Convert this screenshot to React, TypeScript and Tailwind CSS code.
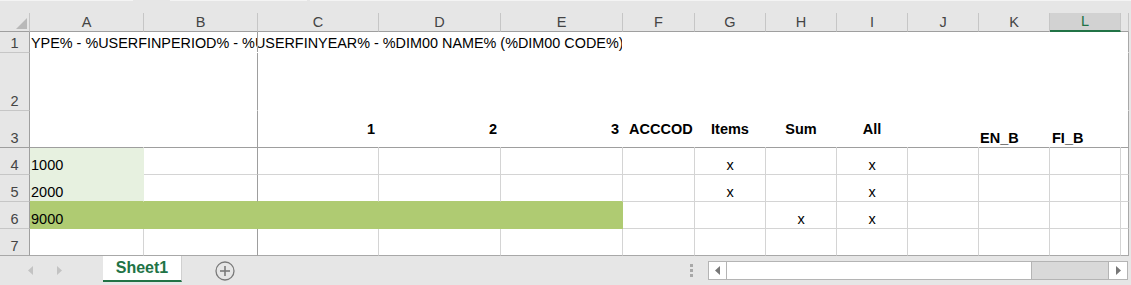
import React from 'react';

const COLS = ['A', 'B', 'C', 'D', 'E', 'F', 'G', 'H', 'I', 'J', 'K', 'L', 'M'];

type C = { t: string; cls: string };

const CONTENT: Record<string, C> = {
  C3: { t: '1', cls: 'justify-end items-center pr-[3px] font-bold' },
  D3: { t: '2', cls: 'justify-end items-center pr-[3px] font-bold' },
  E3: { t: '3', cls: 'justify-end items-center pr-[3px] font-bold' },
  F3: { t: 'ACCCOD', cls: 'justify-start items-center pl-[6px] font-bold' },
  G3: { t: 'Items', cls: 'justify-center items-center font-bold' },
  H3: { t: 'Sum', cls: 'justify-center items-center font-bold' },
  I3: { t: 'All', cls: 'justify-center items-center font-bold' },
  K3: { t: 'EN_B', cls: 'justify-start items-end pl-[1px] font-bold' },
  L3: { t: 'FI_B', cls: 'justify-start items-end pl-[2px] font-bold' },
  A4: { t: '1000', cls: 'justify-start items-end pl-[1px]' },
  G4: { t: 'x', cls: 'justify-center items-end' },
  I4: { t: 'x', cls: 'justify-center items-end' },
  A5: { t: '2000', cls: 'justify-start items-end pl-[1px]' },
  G5: { t: 'x', cls: 'justify-center items-end' },
  I5: { t: 'x', cls: 'justify-center items-end' },
  A6: { t: '9000', cls: 'justify-start items-end pl-[1px]' },
  H6: { t: 'x', cls: 'justify-center items-end' },
  I6: { t: 'x', cls: 'justify-center items-end' },
};

function bgCls(r: number, c: number) {
  if ((r === 4 || r === 5) && c === 0) return 'bg-[#e7f1e0]';
  if (r === 6 && c <= 4) return 'bg-[#afcb72]';
  return 'bg-white';
}

function rightCls(r: number, c: number) {
  if (c === 12) return 'border-r-[#a8a8a8]';
  if (r === 6 && c <= 4) return 'border-r-[#afcb72]';
  if ((r === 4 || r === 5) && c === 0) return 'border-r-[#e7f1e0]';
  if (c === 1) return 'border-r-[#9e9e9e]';
  if (r <= 3) return 'border-r-white';
  return 'border-r-[#d4d4d4]';
}

function bottomCls(r: number, c: number) {
  if (r === 3) return 'border-b-[#9e9e9e]';
  if (r === 7) return 'border-b-[#a8a8a8]';
  if (r <= 2) return 'border-b-white';
  if ((r === 5 || r === 6) && c <= 4) return 'border-b-[#afcb72]';
  if (r === 4 && c === 0) return 'border-b-[#e7f1e0]';
  return 'border-b-[#d4d4d4]';
}

function rowHeadBottom(r: number) {
  if (r === 3) return 'border-b-[#9e9e9e]';
  if (r === 7) return 'border-b-[#a8a8a8]';
  return 'border-b-[#c6c6c6]';
}

function TopStrip() {
  return (
    <div className="h-[13px] bg-[#e6e6e6]">
      <div className="flex h-px">
        <div className="w-[133px] bg-[#f4f4f4]" />
        <div className="w-[37px]" />
        <div className="w-[137px] bg-[#f4f4f4]" />
        <div className="w-[3px]" />
        <div className="flex-1 bg-[#f4f4f4]" />
      </div>
    </div>
  );
}

function Sheet() {
  const cells: React.ReactNode[] = [];
  cells.push(
    <div
      key="corner"
      className="flex items-end justify-end pr-[2px] pb-[2px] bg-[#e6e6e6] border-r border-b border-r-[#c6c6c6] border-b-[#9f9f9f]"
    >
      <svg width="11" height="11" viewBox="0 0 11 11">
        <polygon points="0,11 11,0 11,11" fill="#b9b9b9" />
      </svg>
    </div>
  );
  COLS.forEach((col) => {
    const sel = col === 'L';
    cells.push(
      <div
        key={'h' + col}
        className={
          sel
            ? 'flex items-center justify-center bg-[#d2d2d2] border-r border-r-[#c6c6c6] border-b-2 border-b-[#217346] text-[14.5px] leading-[17px] text-[#217346] overflow-hidden'
            : 'flex items-center justify-center bg-[#e6e6e6] border-r border-r-[#c6c6c6] border-b border-b-[#9f9f9f] text-[14.5px] leading-[17px] text-[#444] overflow-hidden'
        }
      >
        {col === 'M' ? '' : col}
      </div>
    );
  });

  for (let r = 1; r <= 7; r++) {
    cells.push(
      <div
        key={'r' + r}
        className={`flex items-end justify-center bg-[#e6e6e6] border-r border-b border-r-[#9f9f9f] ${rowHeadBottom(r)} text-[14.5px] leading-[17px] text-[#444]`}
      >
        {r}
      </div>
    );
    if (r === 1) {
      cells.push(
        <div
          key="A1"
          className="col-span-5 relative flex items-end bg-white border-r border-b border-r-white border-b-white overflow-hidden"
        >
          <span className="whitespace-nowrap pl-[1px] text-[14.4px] leading-[17px]">
            YPE% - %USERFINPERIOD% - %USERFINYEAR% - %DIM00 NAME% (%DIM00 CODE%)
          </span>
          <div className="absolute left-[227px] top-0 bottom-[-1px] w-px bg-[#9e9e9e]" />
        </div>
      );
    }
    COLS.forEach((col, c) => {
      if (r === 1 && c <= 4) return;
      const key = col + r;
      const ct = CONTENT[key];
      cells.push(
        <div
          key={key}
          className={`flex overflow-hidden border-r border-b ${bgCls(r, c)} ${rightCls(r, c)} ${bottomCls(r, c)} text-[14.5px] leading-[17px] whitespace-nowrap ${ct ? ct.cls : ''}`}
        >
          {ct ? ct.t : ''}
        </div>
      );
    });
  }

  return (
    <div className="grid grid-cols-[30px_114px_114px_121px_122px_122px_72px_71px_71px_71px_71px_71px_71px_8px] grid-rows-[19px_21px_58px_37px_27px_27px_27px_27px]">
      {cells}
    </div>
  );
}

function TabBar() {
  return (
    <div className="flex items-center h-[29px] bg-[#e6e6e6]">
      <svg className="ml-[28px]" width="5" height="9" viewBox="0 0 5 9">
        <polygon points="5,0 0,4.5 5,9" fill="#c3c3c3" />
      </svg>
      <svg className="ml-[24px]" width="5" height="9" viewBox="0 0 5 9">
        <polygon points="0,0 5,4.5 0,9" fill="#c3c3c3" />
      </svg>
      <div className="self-start ml-[41px] w-[79px] h-[26px] bg-white border-b-2 border-b-[#217346] border-r border-r-[#d0d0d0] flex items-center justify-center pb-[1px]">
        <span className="text-[16px] leading-[18px] font-bold text-[#217346]">Sheet1</span>
      </div>
      <svg className="ml-[33px]" width="20" height="20" viewBox="0 0 20 20">
        <circle cx="10" cy="10" r="9" fill="none" stroke="#7a7a7a" strokeWidth="1.3" />
        <line x1="5" y1="10" x2="15" y2="10" stroke="#7a7a7a" strokeWidth="1.6" />
        <line x1="10" y1="5" x2="10" y2="15" stroke="#7a7a7a" strokeWidth="1.6" />
      </svg>
      <div className="ml-[455px] flex flex-col gap-[2px]">
        <div className="w-[3px] h-[3px] bg-[#a8a8a8]" />
        <div className="w-[3px] h-[3px] bg-[#a8a8a8]" />
        <div className="w-[3px] h-[3px] bg-[#a8a8a8]" />
      </div>
      <div className="ml-[15px] w-[420px] h-[19px] flex border border-[#b4b4b4] bg-[#d9d9d9]">
        <div className="w-[18px] bg-white border-r border-r-[#b4b4b4] flex items-center justify-center">
          <svg width="5" height="9" viewBox="0 0 5 9">
            <polygon points="5,0 0,4.5 5,9" fill="#777" />
          </svg>
        </div>
        <div className="w-[305px] bg-white border-r border-r-[#b4b4b4]" />
        <div className="flex-1" />
        <div className="w-[19px] bg-white border-l border-l-[#b4b4b4] flex items-center justify-center">
          <svg width="5" height="9" viewBox="0 0 5 9">
            <polygon points="0,0 5,4.5 0,9" fill="#777" />
          </svg>
        </div>
      </div>
    </div>
  );
}

export default function App() {
  return (
    <div className="w-[1131px] h-[285px] bg-[#e6e6e6] overflow-hidden font-['Liberation_Sans',Arial,sans-serif] text-black">
      <TopStrip />
      <Sheet />
      <TabBar />
    </div>
  );
}
